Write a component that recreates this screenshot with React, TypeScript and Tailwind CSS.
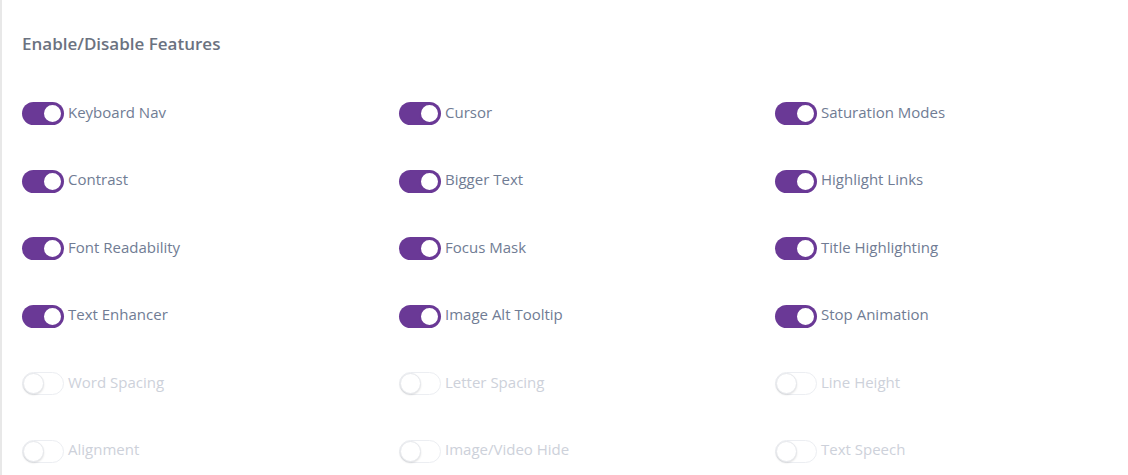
import React from "react";

const features = [
  { name: "Keyboard Nav", on: true },
  { name: "Cursor", on: true },
  { name: "Saturation Modes", on: true },
  { name: "Contrast", on: true },
  { name: "Bigger Text", on: true },
  { name: "Highlight Links", on: true },
  { name: "Font Readability", on: true },
  { name: "Focus Mask", on: true },
  { name: "Title Highlighting", on: true },
  { name: "Text Enhancer", on: true },
  { name: "Image Alt Tooltip", on: true },
  { name: "Stop Animation", on: true },
  { name: "Word Spacing", on: false },
  { name: "Letter Spacing", on: false },
  { name: "Line Height", on: false },
  { name: "Alignment", on: false },
  { name: "Image/Video Hide", on: false },
  { name: "Text Speech", on: false },
];

const Toggle = ({ on }: { on: boolean }) =>
  on ? (
    <span className="relative inline-flex w-[42px] h-[23px] rounded-full bg-[#6a3996] shrink-0">
      <span className="absolute right-[1px] top-[1px] w-[21px] h-[21px] rounded-full bg-white border-2 border-[#6a3996]" />
    </span>
  ) : (
    <span className="relative inline-flex w-[42px] h-[23px] rounded-full bg-white border border-[#eceef2] shrink-0">
      <span className="absolute left-0 top-0 w-[21px] h-[21px] rounded-full bg-white border border-[#e6e8ec] shadow-[0_1px_2px_rgba(0,0,0,0.12)]" />
    </span>
  );

export default function App() {
  return (
    <div className="w-[1128px] h-[475px] bg-white border-l-2 border-[#e8e8e8] pl-5 pt-[32px] overflow-hidden" style={{ fontFamily: '"Open Sans", sans-serif' }}>
      <h2 className="text-[17px] font-semibold text-[#6b7280] leading-[24px]">Enable/Disable Features</h2>
      <div className="grid grid-cols-[377px_376px_1fr] mt-[46px] gap-y-[44.6px]">
        {features.map((f) => (
          <div key={f.name} className="flex items-center h-[23px] gap-[4px]">
            <Toggle on={f.on} />
            <span className={`text-[15px] leading-[20px] -mt-[4px] ${f.on ? "text-[#707c94]" : "text-[#cdd1da]"}`}>{f.name}</span>
          </div>
        ))}
      </div>
    </div>
  );
}
